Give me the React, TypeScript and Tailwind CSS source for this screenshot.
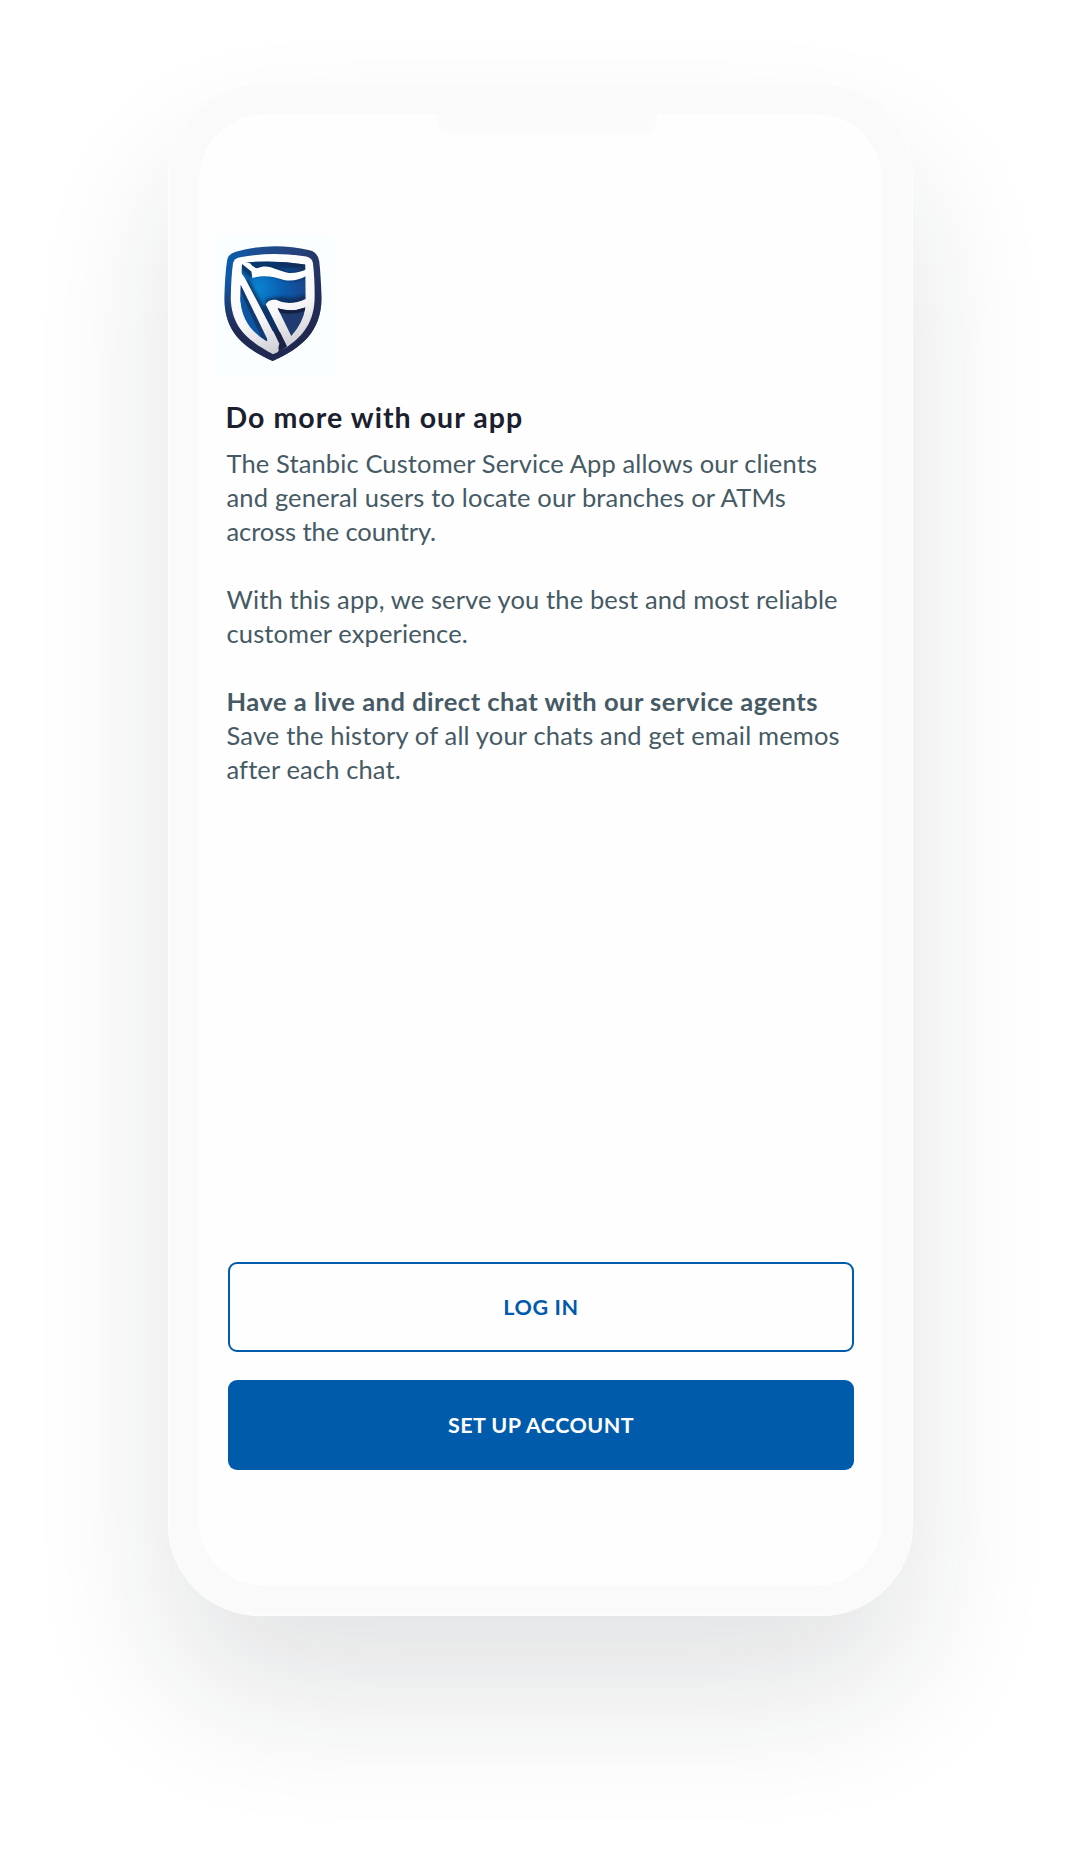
function Shield({ className }: { className: string }) {
  return (
    <svg viewBox="28 28 358 427" className={className}>
      <defs>
        <linearGradient id="rim" x1="0" y1="0" x2="1" y2="0.35">
          <stop offset="0" stopColor="#0560b5" />
          <stop offset="0.3" stopColor="#1c4f93" />
          <stop offset="0.7" stopColor="#26417a" />
          <stop offset="1" stopColor="#232f5c" />
        </linearGradient>
        <linearGradient id="rimShade" x1="0" y1="0" x2="0" y2="1">
          <stop offset="0.3" stopColor="#20284f" stopOpacity="0" />
          <stop offset="0.75" stopColor="#20284f" stopOpacity="0.95" />
        </linearGradient>
        <radialGradient id="field" gradientUnits="userSpaceOnUse" cx="155" cy="190" r="165">
          <stop offset="0" stopColor="#0a86d2" />
          <stop offset="0.5" stopColor="#0a5cae" />
          <stop offset="1" stopColor="#1d3f80" />
        </radialGradient>
        <linearGradient id="silver" gradientUnits="userSpaceOnUse" x1="110" y1="90" x2="230" y2="390">
          <stop offset="0" stopColor="#ffffff" />
          <stop offset="0.6" stopColor="#f8f8fa" />
          <stop offset="1" stopColor="#c8c8d0" />
        </linearGradient>
        <filter id="soft" x="-10%" y="-10%" width="120%" height="120%">
          <feGaussianBlur stdDeviation="4" />
        </filter>
        <clipPath id="inside">
          <path d="M111 112Q205 101 301 117L302 222L246 362L190 345Q113 306 106 220Z" />
        </clipPath>
      </defs>
      <path d="M92 78Q203 48 314 74Q338 80 343 106Q348 150 350 220C348 320 290 368 203 407C116 368 58 320 58 220Q59 150 66 104Q70 83 92 78Z" fill="url(#rim)" />
      <path d="M92 78Q203 48 314 74Q338 80 343 106Q348 150 350 220C348 320 290 368 203 407C116 368 58 320 58 220Q59 150 66 104Q70 83 92 78Z" fill="url(#rimShade)" />
      <path d="M105 95Q203 76 304 93Q321 97 324 112Q330 160 329 223C326 302 282 339 246 365L203 386C126 345 80 305 77 220Q78 150 84 112Q87 99 105 95Z" fill="url(#silver)" />
      <path d="M111 112Q205 101 301 117L302 222L246 362L190 345Q113 306 106 220Z" fill="url(#field)" />
      <g clipPath="url(#inside)">
        <path d="M119 165L230 375M142 142Q180 125 222 143Q262 162 303 142M184 234Q220 222 252 230Q280 232 303 219M180 238L240 362M108 112L302 117M112 115L144 150" fill="none" stroke="#111c3b" strokeWidth="26" opacity="0.6" filter="url(#soft)" />
      </g>
      <path d="M105 105L135 113Q144 127 157 128C190 112 215 136 252 142Q276 144 308 130L308 149Q270 171 237 163C205 155 184 147 142 157L139 138L111 115Z" fill="#fff" />
      <path d="M104 130L109 142L121 160L223 355L218 380L203 386L186 348L106 184Z" fill="url(#silver)" />
      <path d="M182 236Q193 220 213 223Q252 244 306 219L312 225L308 280L290 325L246 363Z" fill="url(#silver)" />
      <path d="M107 178L187 342Q190 349 184 347Q112 305 106 225Z" fill="#0b57a6" />
      <path d="M107 178L187 342Q190 349 184 347L168 335L107 200Z" fill="#15305f" opacity="0.75" />
      <path d="M218 248Q260 261 301 246Q296 290 259 332Z" fill="#213a70" />
      <path d="M218 248Q260 261 301 246L299 257Q262 270 225 262Z" fill="#14203f" />
      <path d="M210 312L226 322L246 364L222 378Z" fill="#1b2347" />
      <path d="M190 315L205 318L223 355L216 381L203 386L186 348Z" fill="url(#silver)" />
    </svg>
  );
}

export default function App() {
  return (
    <main className="flex h-[1868px] w-[1080px] justify-center bg-white pt-[84px] pl-px font-['Lato',sans-serif]">
      <div className="h-[1532px] w-[745px] rounded-[92px] bg-[#fafafa] px-[31px] py-[30px] shadow-[0_80px_140px_rgba(28,34,45,0.12),inset_0_0_0_1px_rgba(255,255,255,0.6)]">
        <div className="relative flex h-full flex-col rounded-[66px] bg-[#fefefe] pt-[121px]">
          <div className="absolute top-0 left-[237px] h-6 w-[221px] rounded-b-[20px] bg-linear-to-b from-[#fbfbfb] from-60% to-[#fefefe]" />
          <div className="ml-[15px] h-[142px] w-[120px] bg-[#fbfefe]">
            <Shield className="h-[142px] w-[120px]" />
          </div>
          <div className="mt-[23px] ml-[27.5px] whitespace-nowrap">
            <h1 className="-ml-px text-[28.5px] leading-[34px] font-bold tracking-[1.05px] text-[#1b202e]">Do more with our app</h1>
            <div className="mt-3 text-[25.5px] leading-[34px] tracking-[0.12px] text-[#455a64]">
              <p>
                The Stanbic Customer Service App allows our clients<br />
                <span className="tracking-[0.17px]">and general users to locate our branches or ATMs</span><br />
                <span className="tracking-[-0.1px]">across the country.</span>
              </p>
              <p className="mt-[34px]">
                With this app, we serve you the best and most reliable<br />
                customer experience.
              </p>
              <p className="mt-[34px]">
                <strong className="font-bold tracking-[0.5px]">Have a live and direct chat with our service agents</strong><br />
                <span className="tracking-[0.17px]">Save the history of all your chats and get email memos</span><br />
                after each chat.
              </p>
            </div>
          </div>
          <div className="mt-auto mr-7 mb-[116px] ml-[29px] flex flex-col gap-7 text-[21.5px] font-bold">
            <button className="h-[90px] rounded-[9px] border-2 border-[#005baa] tracking-[0.6px] text-[#005baa]">LOG IN</button>
            <button className="h-[90px] rounded-[9px] bg-[#005baa] tracking-[0.45px] text-white">SET UP ACCOUNT</button>
          </div>
        </div>
      </div>
    </main>
  );
}
